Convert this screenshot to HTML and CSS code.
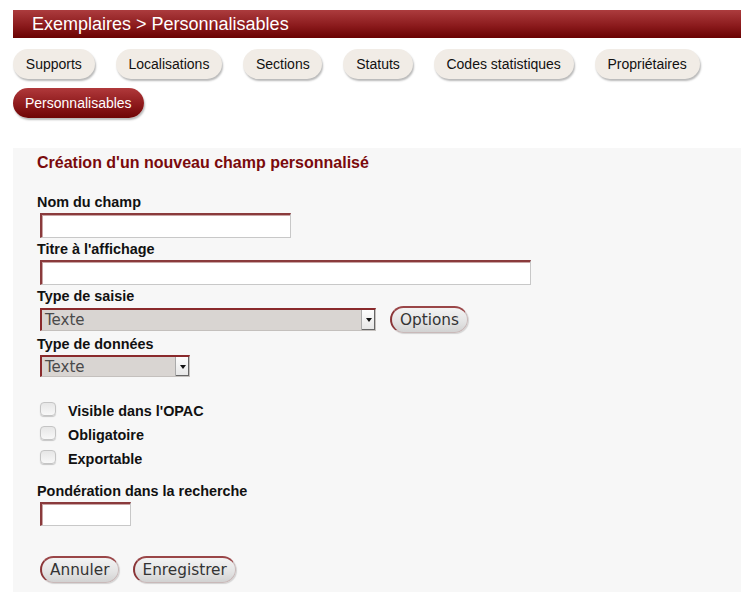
FILE: index.html
```html
<!DOCTYPE html>
<html lang="fr">
<head>
<meta charset="utf-8">
<title>Exemplaires &gt; Personnalisables</title>
<link rel="stylesheet" href="styles.css">
</head>
<body>
<div class="page">
  <h1 class="title-bar">Exemplaires &gt; Personnalisables</h1>
  <nav class="tabs">
    <a class="tab">Supports</a>
    <a class="tab">Localisations</a>
    <a class="tab">Sections</a>
    <a class="tab">Statuts</a>
    <a class="tab">Codes statistiques</a>
    <a class="tab">Propriétaires</a>
    <a class="tab active">Personnalisables</a>
  </nav>
  <form class="panel">
    <h2 class="panel-title">Création d'un nouveau champ personnalisé</h2>
    <div class="fields">
      <label class="lbl">Nom du champ</label>
      <input class="txt w-name" type="text">
      <label class="lbl">Titre à l'affichage</label>
      <input class="txt w-title" type="text">
      <label class="lbl">Type de saisie</label>
      <div class="row">
        <div class="sel w-saisie"><span>Texte</span><i class="arrow"></i></div>
        <button type="button" class="btn">Options</button>
      </div>
      <label class="lbl">Type de données</label>
      <div class="sel w-data"><span>Texte</span><i class="arrow"></i></div>
    </div>
    <div class="checks">
      <div class="chk"><span class="box"></span><span>Visible dans l'OPAC</span></div>
      <div class="chk"><span class="box"></span><span>Obligatoire</span></div>
      <div class="chk"><span class="box"></span><span>Exportable</span></div>
    </div>
    <div class="fields fields-pond">
      <label class="lbl">Pondération dans la recherche</label>
      <input class="txt w-pond" type="text">
    </div>
    <div class="actions">
      <button type="button" class="btn">Annuler</button>
      <button type="button" class="btn">Enregistrer</button>
    </div>
  </form>
</div>
</body>
</html>
```
FILE: styles.css
```css
* { box-sizing: border-box; }
body {
  margin: 0;
  background: #fff;
  font-family: "Liberation Sans", Arial, sans-serif;
  color: #111;
}
.page {
  padding: 10px 13px 0 13px;
  width: 754px;
}
.title-bar {
  margin: 0;
  height: 28px;
  line-height: 28px;
  padding-left: 19px;
  font-size: 18px;
  font-weight: normal;
  color: #fff;
  background: linear-gradient(to bottom, #ac3c3e 0%, #8c1b1d 55%, #6a0202 100%);
}
.tabs {
  display: flex;
  flex-wrap: wrap;
  column-gap: 21px;
  row-gap: 9px;
  margin-top: 11px;
}
.tab {
  display: block;
  height: 30px;
  line-height: 30px;
  padding: 0 12.8px;
  border-radius: 15px;
  font-size: 14px;
  color: #111;
  background: #f1ece6;
  box-shadow: 1px 2px 2px rgba(0,0,0,0.28);
  cursor: pointer;
}
.tab.active {
  padding: 0 12px;
  color: #fff;
  background: linear-gradient(to bottom, #b0393b 0%, #8e1a1c 55%, #6e0505 100%);
}
.panel {
  margin: 30px 0 0 0;
  background: #f7f7f7;
  padding: 5px 24px 0 24px;
  height: 444px;
}
.panel-title {
  margin: 0 0 18px 0;
  font-size: 16px;
  font-weight: bold;
  color: #7a0a0c;
  line-height: 20px;
}
.fields {
  display: flex;
  flex-direction: column;
  align-items: flex-start;
}
.lbl {
  font-size: 14.4px;
  font-weight: bold;
  line-height: 18px;
  margin: 2px 0;
}
.txt {
  margin: 0 0 0 3px;
  height: 25px;
  border: 1px solid #c8c8c8;
  border-top: 2px solid #8a3a3c;
  border-left: 2px solid #8a3a3c;
  background: #fff;
  box-shadow: inset 1px 1px 0 #c9a4a4;
  padding: 0;
}
.w-name { width: 251px; }
.w-title { width: 491px; }
.w-pond { width: 91px; height: 24px; }
.row {
  display: flex;
  align-items: center;
  gap: 14px;
  margin-left: 3px;
  margin-top: -1px;
}
.sel {
  position: relative;
  display: flex;
  align-items: center;
  height: 23px;
  background: #d9d5d2;
  border: 1px solid #c4c0bd;
  border-top: 2px solid #8a2a2c;
  border-left: 2px solid #8a2a2c;
  font-family: "DejaVu Sans", sans-serif;
  font-size: 15px;
  color: #4a4a4a;
  padding-left: 3px;
}
.w-saisie { width: 336px; }
.w-data { width: 150px; height: 22px; margin-left: 3px; }
.sel .arrow {
  position: absolute;
  right: 0;
  top: 0;
  bottom: 0;
  width: 14px;
  background: linear-gradient(to bottom, #fdfdfd, #e6e6e6);
  border-left: 1px solid #aaa;
  box-shadow: inset -1px -1px 0 #666;
}
.sel .arrow::after {
  content: "";
  position: absolute;
  left: 4px;
  top: 8px;
  border-left: 3px solid transparent;
  border-right: 3px solid transparent;
  border-top: 4px solid #111;
}
.btn {
  font-family: "DejaVu Sans", sans-serif;
  font-size: 15.3px;
  color: #333;
  height: 27px;
  padding: 0 8px;
  border-radius: 14px;
  border: 1px solid #c9b9b9;
  border-left: 2px solid #8a3436;
  border-top: 2px solid #9a4648;
  background: linear-gradient(to bottom, #f3f3f3 0%, #e3e3e3 60%, #d2d2d2 100%);
  box-shadow: 1px 1px 1px rgba(0,0,0,0.15);
}
.checks {
  display: flex;
  flex-direction: column;
  gap: 8px;
  margin: 26px 0 0 3px;
}
.chk {
  display: flex;
  align-items: center;
  gap: 12px;
  height: 16px;
  font-size: 14.4px;
  font-weight: bold;
}
.box {
  width: 16px;
  height: 14px;
  border-radius: 4px;
  border: 1px solid #c4c4c4;
  background: linear-gradient(to bottom, #e6e6e6, #f8f8f8);
  box-shadow: 0 1px 1px rgba(0,0,0,0.2);
  position: relative;
  top: -2px;
}
.fields-pond { margin-top: 13px; }
.actions {
  display: flex;
  gap: 14px;
  margin: 30px 0 0 3px;
}
```
